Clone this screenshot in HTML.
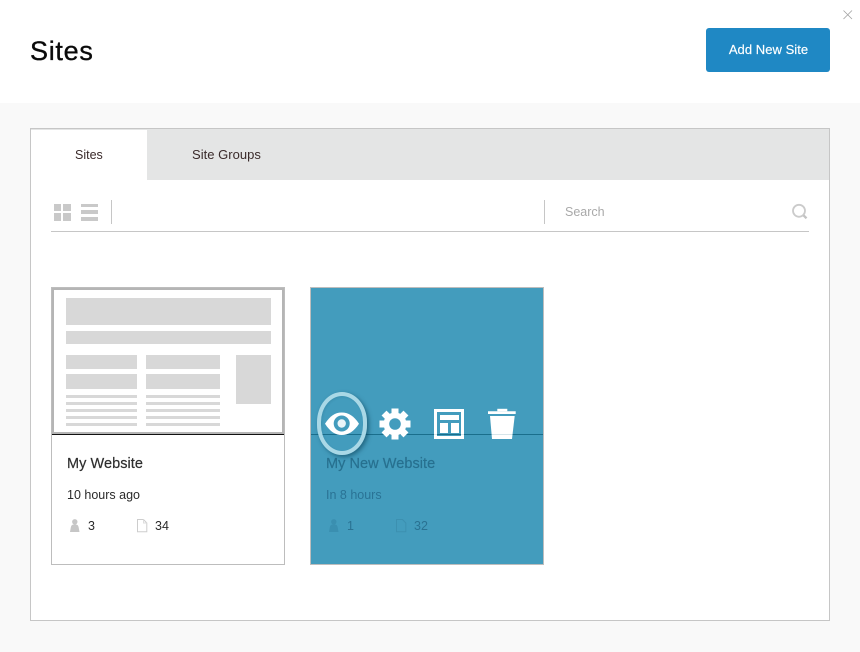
<!DOCTYPE html>
<html>
<head>
<meta charset="utf-8">
<style>
html,body{margin:0;padding:0;width:860px;height:652px;overflow:hidden;background:#fff;font-family:"Liberation Sans",sans-serif}
div,span,svg{position:absolute;box-sizing:border-box}
.t{white-space:nowrap;line-height:16px}
.g{background:#d8d8d8;filter:blur(.35px)}
.i{background:#c9c9c9;filter:blur(.25px)}
</style>
</head>
<body>
<div style="left:0;top:103px;width:860px;height:549px;background:#f9f9f9"></div>
<div class="t" style="left:30px;top:35px;font-size:27px;line-height:32px;color:#0a0a0a;letter-spacing:.7px;-webkit-text-stroke:.35px #0a0a0a">Sites</div>
<svg style="left:842px;top:9px" width="11" height="11"><path d="M1.500 1.500L10 10M10 1.500L1.500 10" stroke="#a0a0a0" stroke-width=".8" fill="none"/></svg>
<div style="left:706px;top:28px;width:124px;height:44px;background:#1f88c4;border-radius:3px"></div>
<div class="t" style="left:706px;top:42px;width:125px;text-align:center;font-size:13px;letter-spacing:.05px;color:#fff;-webkit-text-stroke:.15px #fff">Add New Site</div>

<div style="left:30px;top:128px;width:800px;height:493px;background:#fff;border:1px solid #c6c6c6"></div>
<div style="left:31px;top:129px;width:798px;height:51px;background:#e4e5e5"></div>
<div style="left:31px;top:130px;width:116px;height:50px;background:#fff"></div>
<div class="t" style="left:75px;top:147px;font-size:12.5px;color:#3a2a2a">Sites</div>
<div class="t" style="left:192px;top:147px;font-size:13px;letter-spacing:.02px;color:#3a2a2a">Site Groups</div>

<div class="i" style="left:53.500px;top:203.500px;width:7.500px;height:7.500px"></div>
<div class="i" style="left:63px;top:203.500px;width:7.500px;height:7.500px"></div>
<div class="i" style="left:53.500px;top:213px;width:7.500px;height:7.500px"></div>
<div class="i" style="left:63px;top:213px;width:7.500px;height:7.500px"></div>
<div class="i" style="left:80.500px;top:203.700px;width:17px;height:3.500px"></div>
<div class="i" style="left:80.500px;top:210.300px;width:17px;height:3.700px"></div>
<div class="i" style="left:80.500px;top:217px;width:17px;height:3.500px"></div>
<div style="left:111px;top:200px;width:1px;height:24px;background:#c6c6c6"></div>
<div style="left:544px;top:200px;width:1px;height:24px;background:#c6c6c6"></div>
<div class="t" style="left:565px;top:204px;font-size:12.5px;color:#a9a9a9">Search</div>
<svg style="left:790px;top:203px" width="20" height="18"><circle cx="9" cy="7.800" r="6" stroke="#cbcbcb" stroke-width="1.800" fill="none"/><path d="M13.500 12.300L16.500 15.300" stroke="#c4c4c4" stroke-width="2.400"/></svg>
<div style="left:51px;top:231px;width:758px;height:1px;background:#c6c6c6"></div>

<!-- Card 1 -->
<div style="left:51px;top:287px;width:234px;height:278px;background:#fff;border:1px solid #bdbdbd"></div>
<div style="left:52px;top:288px;width:232px;height:146px;border:2px solid #b5b5b5"></div>
<div style="left:52px;top:434px;width:232px;height:1px;background:#111"></div>
<div class="g" style="left:66px;top:298px;width:205px;height:27px"></div>
<div class="g" style="left:66px;top:331px;width:205px;height:13px"></div>
<div class="g" style="left:66px;top:355px;width:71px;height:14px"></div>
<div class="g" style="left:146px;top:355px;width:74px;height:14px"></div>
<div class="g" style="left:66px;top:374px;width:71px;height:15px"></div>
<div class="g" style="left:146px;top:374px;width:74px;height:15px"></div>
<div class="g" style="left:236px;top:355px;width:35px;height:49px"></div>
<div class="g" style="left:66px;top:395px;width:71px;height:3px"></div>
<div class="g" style="left:66px;top:402px;width:71px;height:3px"></div>
<div class="g" style="left:66px;top:409px;width:71px;height:3px"></div>
<div class="g" style="left:66px;top:416px;width:71px;height:3px"></div>
<div class="g" style="left:66px;top:423px;width:71px;height:3px"></div>
<div class="g" style="left:146px;top:395px;width:74px;height:3px"></div>
<div class="g" style="left:146px;top:402px;width:74px;height:3px"></div>
<div class="g" style="left:146px;top:409px;width:74px;height:3px"></div>
<div class="g" style="left:146px;top:416px;width:74px;height:3px"></div>
<div class="g" style="left:146px;top:423px;width:74px;height:3px"></div>
<div class="t" style="left:67px;top:456px;font-size:14.500px;letter-spacing:.05px;color:#2e2e2e;-webkit-text-stroke:.2px #2e2e2e">My Website</div>
<div class="t" style="left:67px;top:487px;font-size:12.500px;color:#2a2a2a">10 hours ago</div>
<svg style="left:70px;top:519px" width="10" height="14"><circle cx="4.800" cy="2.800" r="2.700" fill="#c6c6c6"/><path d="M0 13L.8 8.500Q1.300 5.500 3.500 5.500H6Q8.200 5.500 8.700 8.500L9.500 13Z" fill="#c6c6c6"/></svg>
<div class="t" style="left:88px;top:518px;font-size:12.500px;color:#2a2a2a">3</div>
<svg style="left:137px;top:519px" width="11" height="14"><path d="M.5 .5H6.500L9.800 4V12.800H.5Z" fill="none" stroke="#cdcdcd"/><path d="M6.500 .5V4H9.800" fill="none" stroke="#dedede"/></svg>
<div class="t" style="left:155px;top:518px;font-size:12.500px;color:#2a2a2a">34</div>

<!-- Card 2 -->
<div style="left:310px;top:287px;width:234px;height:278px;background:#439cbd;border:1px solid #bdbdbd"></div>
<div style="left:311px;top:434px;width:232px;height:1px;background:#1a6e8c"></div>
<div class="t" style="left:326px;top:456px;font-size:14.500px;letter-spacing:.05px;color:#27708f;-webkit-text-stroke:.2px #27708f">My New Website</div>
<div class="t" style="left:326px;top:487px;font-size:12.500px;color:#2a7395">In 8 hours</div>
<svg style="left:329px;top:519px" width="10" height="14"><circle cx="4.800" cy="2.800" r="2.700" fill="#3a8fb0"/><path d="M0 13L.8 8.500Q1.300 5.500 3.500 5.500H6Q8.200 5.500 8.700 8.500L9.500 13Z" fill="#3a8fb0"/></svg>
<div class="t" style="left:347px;top:518px;font-size:12.500px;color:#2a7292">1</div>
<svg style="left:396px;top:519px" width="11" height="14"><path d="M.5 .5H6.500L9.800 4V12.800H.5Z" fill="none" stroke="#3c90b0"/></svg>
<div class="t" style="left:414px;top:518px;font-size:12.500px;color:#2a7292">32</div>

<!-- Highlight oval -->
<div style="left:317px;top:392px;width:50px;height:63px;border:4px solid #a9d8e6;border-radius:25px/30px;box-shadow:2px 2px 4px rgba(0,50,70,.5),inset 1px 1px 2px rgba(0,50,70,.1)"></div>

<!-- Eye -->
<svg style="left:324px;top:411px" width="37" height="26"><path d="M1 12.700C6 5 11 1.500 17.700 1.500S30 5 35 12.700C30 20.500 24 24 17.700 24S6 20.500 1 12.700Z" fill="#fff"/><circle cx="17.700" cy="12.500" r="8" fill="#439cbd"/><circle cx="17.700" cy="12.500" r="4.200" fill="#eaf5f9"/></svg>
<!-- Gear -->
<svg style="left:379px;top:408px" width="32" height="32" viewBox="0 0 32 32"><g fill="#fff"><circle cx="16" cy="16" r="11.500"/><rect x="12.500" y="0.500" width="7" height="31"/><rect x="12.500" y="0.500" width="7" height="31" transform="rotate(45 16 16)"/><rect x="12.500" y="0.500" width="7" height="31" transform="rotate(90 16 16)"/><rect x="12.500" y="0.500" width="7" height="31" transform="rotate(135 16 16)"/></g><circle cx="16" cy="16" r="5.800" fill="#439cbd"/></svg>
<!-- Layout -->
<div style="left:434px;top:409px;width:30px;height:30px;border:3px solid #fff"></div>
<div style="left:440px;top:415px;width:19px;height:5px;background:#fff"></div>
<div style="left:440px;top:423px;width:8px;height:10px;background:#fff"></div>
<div style="left:451px;top:423px;width:8px;height:10px;background:#fff"></div>
<!-- Trash -->
<svg style="left:487px;top:408px" width="30" height="32"><path d="M1 3.300H28.700V6H1Z" fill="#fff"/><path d="M10.300 .8H20.300V3.300H10.300Z" fill="#fff"/><path d="M3 8H27.700L25 31H5Z" fill="#fff"/></svg>
<!-- Line over icons -->
<div style="left:434px;top:434px;width:82px;height:1px;background:rgba(26,110,140,.18)"></div>
</body>
</html>
